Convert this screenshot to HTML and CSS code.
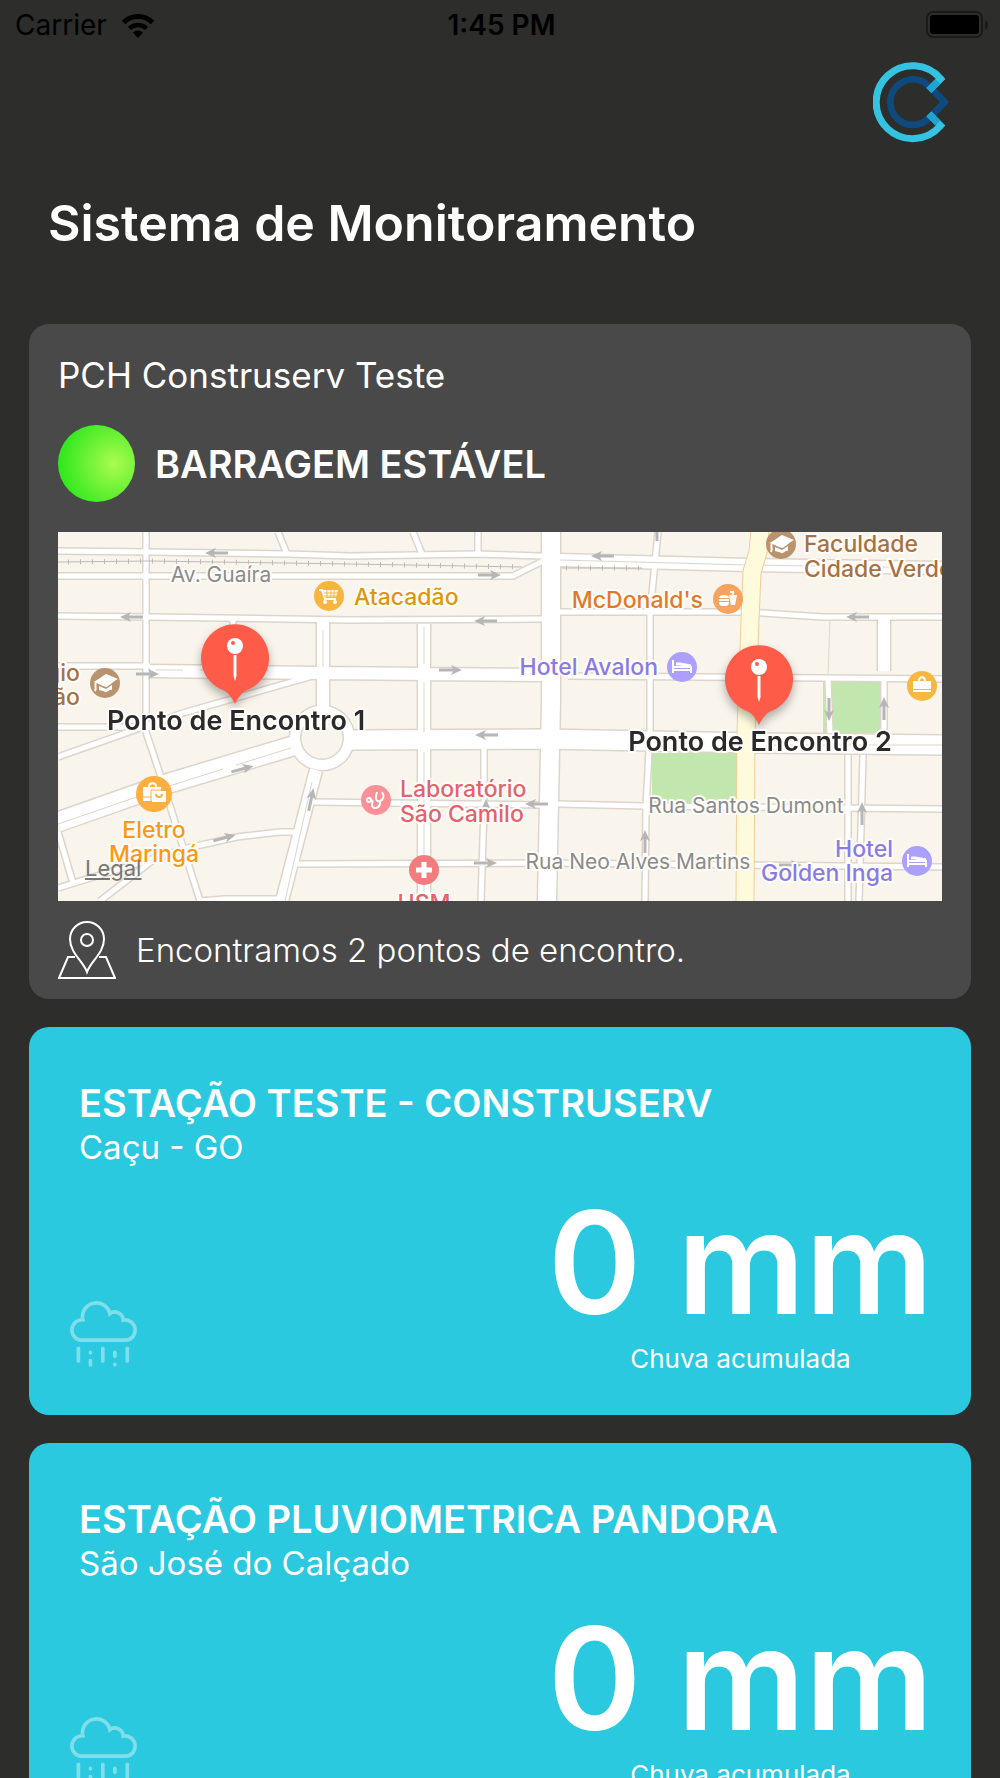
FILE: index.html
```html
<!DOCTYPE html>
<html lang="pt-BR">
<head>
  <meta charset="UTF-8" />
  <meta name="viewport" content="width=device-width, initial-scale=1.0" />
  <title>Sistema de Monitoramento</title>
  <link rel="stylesheet" href="styles.css">
</head>
<body>
  <div class="app">
    <div class="status-bar">
      <div class="carrier">
        <span>Carrier</span>
        <svg class="wifi" viewBox="0 0 34 25" aria-hidden="true">
          <path d="M2.500 9.500a20.500 20.500 0 0 1 29 0" fill="none" stroke="#000" stroke-width="5"/>
          <path d="M8.500 15.500a12 12 0 0 1 17 0" fill="none" stroke="#000" stroke-width="4.500"/>
          <path d="M12 19.500a7 7 0 0 1 10 0L17 25z"/>
        </svg>
      </div>
      <span class="time">1:45 PM</span>
      <svg class="battery" viewBox="0 0 62 28" aria-hidden="true">
        <rect x="1" y="1" width="55" height="25" rx="6" fill="none" stroke="#1a1a19" stroke-width="2"/>
        <rect x="4" y="4" width="49" height="19" rx="3"/>
        <path d="M59 9c4 2 4 8 0 10z" fill="#1a1a19"/>
      </svg>
    </div>

    <header>
      <svg class="logo" viewBox="100 65 230 242" role="img" aria-label="Construserv">
        <path d="M314 185L268 137A68 68 0 1 0 268 233Z" fill="none" stroke="#0f4a7f" stroke-width="20"/>
        <path d="M267 150L302 115A109 109 0 1 0 302 255L267 220" fill="none" stroke="#35c3e2" stroke-width="21"/>
        <path d="M267 150L294 123M267 220L294 247" stroke="#1fa4d2" stroke-width="21"/>
      </svg>
      <h1>Sistema de Monitoramento</h1>
    </header>

    <main>
      <section class="card dam">
        <h2 class="dam-name">PCH Construserv Teste</h2>
        <div class="dam-status">
          <span class="light"></span>
          <strong>BARRAGEM ESTÁVEL</strong>
        </div>

        <div class="map">
          <svg viewBox="0 0 884 369" role="img" aria-label="Mapa dos pontos de encontro">
            <defs>
              <path id="arrow" d="M-11-1.500H3L1-5L12 0L1 5L3 1.500H-11z"/>
              <g id="bed" fill="none" stroke="#fff" stroke-width="2">
                <path d="M-9-7V6M-9 3H9V6M-9 0H9V3"/>
                <path d="M-6-3H-2L9-1" stroke-width="3"/>
              </g>
              <g id="cap" fill="#fff">
                <path d="M-12-1C-8-2-3-7 1-9C5-7 9-6 13-4C8-2 5 3 1 4C-3 3-7 0-12-1z"/>
                <path d="M-6 3L1 6L7 2V7C4 6 3 10 0 9C-2 7-4 8-6 7z"/>
                <path d="M-9 0C-11 2-8 5-10 8" fill="none" stroke="#fff" stroke-width="2"/>
              </g>
              <g id="pin">
                <path d="M0 46C-3 40-6 35-12 32A34 34 0 1 1 12 32C6 35 3 40 0 46z" fill="#ff5b49"/>
                <circle cy="-12" r="8" fill="#fff"/>
                <circle cx="-2" cy="-15" r="2" fill="#ff5b49"/>
                <path d="M-1.500-3H1.500V18L0 23L-1.500 18z" fill="#fff"/>
              </g>
              <!-- streets, grouped by width: drawn twice, edge then surface -->
              <g id="small">
                <path d="M0 19L92 20L229 22L292 24L419 22L484 24M0 44H455L487 28M0 84L92 85L292 88L484 87M502 80H690L765 85H884M0 134H92M0 195H92M510 144L884 147"/>
                <path d="M220 0L229 22M355 0L364 22M420 0V22M88 0V200L100 236L125 315L142 369M0 225L125 181L265 141M175 88V100"/>
                <path d="M255 270L484 273M500 272L587 274L884 277M235 332L489 331L884 335M600 0L592 81V200L588 275L587 369M426 217V275L423 369"/>
                <path d="M242 300H222L179 305L129 316L0 356M99 325L42 369M0 300L15 351M770 148L772 201M826 147V201M790 223V369M805 223L801 369M142 369L167 367H230"/>
              </g>
              <g id="wide">
                <path d="M92 139L265 141L484 143M265 90V178M366 92V369M502 28L690 33L884 36M826 86V139M258 238L224 369"/>
              </g>
              <g id="large">
                <path d="M0 290L105 253L238 213M292 208L484 207L700 211L884 213"/>
              </g>
            </defs>

            <rect width="884" height="369" fill="#f9f4ec"/>
            <path d="M765 150H823V201H765zM594 221H679V271H594z" fill="#c1e7ae"/>
            <path d="M772 88L770 143" stroke="#dedacb"/>

            <g class="edge">
              <use href="#small" stroke-width="8"/>
              <use href="#wide" stroke-width="15"/>
              <use href="#large" stroke-width="22"/>
              <circle cx="264" cy="206" r="27" stroke-width="13"/>
              <path d="M493 0V170L489 369" stroke-width="21"/>
            </g>
            <g class="surface">
              <use href="#small" stroke-width="5"/>
              <use href="#wide" stroke-width="12"/>
              <use href="#large" stroke-width="19"/>
              <circle cx="264" cy="206" r="27" stroke-width="10"/>
              <path d="M493 0V170L489 369" stroke-width="18"/>
            </g>
            <g class="edge">
              <path d="M502 28L690 33L884 36M0 292L105 256L165 237M178 233L233 216M265 98V135M366 95V132M366 150V200M366 220V369M254 250L227 369M98 138H125M142 138H210M710 213H884"/>
            </g>
            <path d="M0 30L92 29L292 32L464 35M504 36H584" fill="none" stroke="#bdbab6"/>
            <path d="M10 30L92 29L292 32L464 35M508 36H584" fill="none" stroke="#bdbab6" stroke-width="5" stroke-dasharray="1 11"/>

            <g fill="none">
              <path d="M702 -2L700 20L694 40L692 88L688 201L687 371" stroke="#f3cd9a" stroke-width="19"/>
              <path d="M702 -2L700 20L694 40L692 88L688 201L687 371" stroke="#fdfbdb" stroke-width="17"/>
            </g>

            <g fill="#b6b6b6">
              <use href="#arrow" transform="translate(159 21) rotate(180)"/>
              <use href="#arrow" transform="translate(74 85) rotate(180)"/>
              <use href="#arrow" transform="translate(89 142)"/>
              <use href="#arrow" transform="translate(184 237) rotate(-15)"/>
              <use href="#arrow" transform="translate(166 306) rotate(-15)"/>
              <use href="#arrow" transform="translate(253 268) rotate(-78)"/>
              <use href="#arrow" transform="translate(431 43)"/>
              <use href="#arrow" transform="translate(545 24) rotate(180)"/>
              <use href="#arrow" transform="translate(428 89) rotate(180)"/>
              <use href="#arrow" transform="translate(392 138)"/>
              <use href="#arrow" transform="translate(429 203) rotate(180)"/>
              <use href="#arrow" transform="translate(479 272) rotate(180)"/>
              <use href="#arrow" transform="translate(427 331)"/>
              <use href="#arrow" transform="translate(428 279) rotate(-90)"/>
              <use href="#arrow" transform="translate(587 310) rotate(-90)"/>
              <use href="#arrow" transform="translate(599 -2) rotate(-90)"/>
              <use href="#arrow" transform="translate(800 85) rotate(180)"/>
              <use href="#arrow" transform="translate(771 177) rotate(90)"/>
              <use href="#arrow" transform="translate(826 177) rotate(-90)"/>
              <use href="#arrow" transform="translate(804 282) rotate(-90)"/>
              <use href="#arrow" transform="translate(732 333)"/>
            </g>

            <g class="street">
              <text x="163" y="50" text-anchor="middle">Av. Guaíra</text>
              <text x="688" y="281" text-anchor="middle">Rua Santos Dumont</text>
              <text x="580" y="337" text-anchor="middle">Rua Neo Alves Martins</text>
            </g>

            <g class="place">
              <text x="296" y="73" fill="#dc980a">Atacadão</text>
              <text x="645" y="76" text-anchor="end" fill="#e07a2d">McDonald's</text>
              <text x="600" y="143" text-anchor="end" fill="#8a7ae8">Hotel Avalon</text>
              <g fill="#a77243">
                <text x="746" y="20">Faculdade</text>
                <text x="746" y="45">Cidade Verde</text>
                <text x="22" y="149" text-anchor="end">Colégio</text>
                <text x="22" y="173" text-anchor="end">João</text>
              </g>
              <g fill="#fd9812" text-anchor="middle">
                <text x="96" y="306">Eletro</text>
                <text x="96" y="330">Maringá</text>
              </g>
              <g fill="#e2636b">
                <text x="342" y="265">Laboratório</text>
                <text x="342" y="290">São Camilo</text>
                <text x="366" y="379" text-anchor="middle">HSM</text>
              </g>
              <g fill="#8a7ae8" text-anchor="end">
                <text x="835" y="325">Hotel</text>
                <text x="835" y="349">Golden Inga</text>
              </g>
            </g>

            <g transform="translate(271 64)">
              <circle r="15" fill="#f6b53e"/>
              <path d="M-10-6H-7L-4 3H7" fill="none" stroke="#fff" stroke-width="2"/>
              <path d="M-7-6H9L7 1H-4z" fill="#fff"/>
              <path d="M-5-3H8M-5 0H8M-2-6V1M2-6V1M5-6V1" stroke="#f6b53e"/>
              <circle cx="-4" cy="6" r="2" fill="#fff"/><circle cx="6" cy="6" r="2" fill="#fff"/>
            </g>
            <g transform="translate(670 67)">
              <circle r="15" fill="#f8a360"/>
              <path d="M-9-1C-9-5 1-5 1-1zM-9 0H1V2H-9zM-9 3H1C1 7-1 7-4 7C-8 7-9 6-9 3zM1-4H9L7 6H3z" fill="#fff"/>
              <path d="M2-7H5V-3" fill="none" stroke="#fff" stroke-width="2"/>
            </g>
            <circle cx="624" cy="135" r="15" fill="#ab9fff"/>
            <use href="#bed" x="624" y="135"/>
            <circle cx="859" cy="329" r="15" fill="#ab9fff"/>
            <use href="#bed" x="859" y="329"/>
            <circle cx="723" cy="12" r="15" fill="#b9926e"/>
            <use href="#cap" x="723" y="12"/>
            <circle cx="47" cy="151" r="15" fill="#b9926e"/>
            <use href="#cap" x="47" y="151"/>
            <g transform="translate(864 154)">
              <circle r="15" fill="#f6b840"/>
              <path d="M-9-5H9V3H-9zM-9 4H9V6H-9z" fill="#fff"/>
              <path d="M-3-5C-3-10 3-10 3-5" fill="none" stroke="#fff" stroke-width="2"/>
            </g>
            <g transform="translate(96 262)">
              <circle r="18" fill="#ffae40"/>
              <path d="M-11-7H7V7H-11z" fill="#fff"/>
              <path d="M-5-7C-5-12 2-12 2-7" fill="none" stroke="#fff" stroke-width="2"/>
              <path d="M-11 3H-3M-3 8V-4H13" fill="none" stroke="#ffae40"/>
              <path d="M-2-3H12V8H-2z" fill="#fff"/>
              <path d="M2 0C2 4 8 4 8 0" fill="none" stroke="#ffae40" stroke-width="2"/>
            </g>
            <g transform="translate(318 268)" fill="none" stroke="#fff" stroke-width="2">
              <circle r="15" fill="#fb9097" stroke="none"/>
              <path d="M1-8C-2 1 2 2 4 1C7 0 9-4 6-8M4 1C5 9-4 10-4 5C-4 2-2 1-5 0"/>
              <circle cx="-7" r="2"/>
            </g>
            <g transform="translate(366 338)">
              <circle r="15" fill="#f47b7e"/>
              <path d="M0-8V8M-8 0H8" stroke="#fff" stroke-width="5"/>
            </g>

            <g class="pins">
              <use href="#pin" x="177" y="126"/>
              <use href="#pin" x="701" y="147"/>
            </g>
            <g class="meeting" text-anchor="middle">
              <text x="178" y="198">Ponto de Encontro 1</text>
              <text x="702" y="219">Ponto de Encontro 2</text>
            </g>
          </svg>
          <a class="legal" href="#legal">Legal</a>
        </div>

        <div class="points">
          <svg viewBox="0 0 58 58" fill="none" stroke="#fff" stroke-width="2" aria-hidden="true">
            <path d="M29 51C25 40 12 32 12 18A17 17 0 0 1 46 18C46 32 33 40 29 51z"/>
            <circle cx="29" cy="19" r="6"/>
            <path d="M17 36H10L1 57H57L48 36H41"/>
          </svg>
          <p>Encontramos 2 pontos de encontro.</p>
        </div>
      </section>

      <section class="card station">
        <h2>ESTAÇÃO TESTE - CONSTRUSERV</h2>
        <p class="city">Caçu - GO</p>
        <div class="rain">
          <svg viewBox="50 55 215 203" aria-hidden="true">
            <g fill="none" stroke="#fff" stroke-width="11" stroke-linecap="round">
              <path d="M88 175A31 31 0 0 1 97 114A41 41 0 0 1 178 96A25 25 0 0 1 218 115A30 30 0 0 1 228 175Z"/>
              <path d="M84 199V237M120 211V212M120 236V249M157 199V237M193 211V223M193 247V248M230 199V237"/>
            </g>
          </svg>
          <div class="reading">
            <strong>0 mm</strong>
            <span>Chuva acumulada</span>
          </div>
        </div>
      </section>

      <section class="card station">
        <h2>ESTAÇÃO PLUVIOMETRICA PANDORA</h2>
        <p class="city">São José do Calçado</p>
        <div class="rain">
          <svg viewBox="50 55 215 203" aria-hidden="true">
            <g fill="none" stroke="#fff" stroke-width="11" stroke-linecap="round">
              <path d="M88 175A31 31 0 0 1 97 114A41 41 0 0 1 178 96A25 25 0 0 1 218 115A30 30 0 0 1 228 175Z"/>
              <path d="M84 199V237M120 211V212M120 236V249M157 199V237M193 211V223M193 247V248M230 199V237"/>
            </g>
          </svg>
          <div class="reading">
            <strong>0 mm</strong>
            <span>Chuva acumulada</span>
          </div>
        </div>
      </section>
    </main>
  </div>
</body>
</html>
```
FILE: styles.css
```css
* {
  box-sizing: border-box;
}
body {
  margin: 0;
  background: #2d2d2b;
  color: #fff;
  font-family: Inter, "Liberation Sans", sans-serif;
}
h1, h2, p {
  margin: 0;
}
.app {
  height: 100vh;
  overflow-y: auto;
  scrollbar-width: none;
}

/* status bar */
.status-bar {
  display: grid;
  grid-template-columns: 1fr auto 1fr;
  align-items: center;
  height: 50px;
  padding: 0 12px 0 15px;
  color: #000;
  font-size: 28px;
}
.carrier {
  display: flex;
  align-items: center;
  gap: 14px;
}
.wifi {
  width: 34px;
  height: 25px;
}
.time {
  font-weight: 600;
}
.battery {
  width: 62px;
  height: 28px;
  justify-self: end;
}

/* header */
header {
  padding: 12px 50px 69px 48px;
}
.logo {
  display: block;
  width: 77px;
  height: 81px;
  margin-left: auto;
}
h1 {
  margin-top: 48px;
  font-size: 50px;
  line-height: 64px;
  font-weight: 600;
}

/* cards */
main {
  display: flex;
  flex-direction: column;
  gap: 28px;
  padding: 0 29px 28px;
}
.card {
  border-radius: 20px;
}
.dam {
  padding: 29px 29px 20px;
  background: #494949;
}
.dam-name {
  font-size: 35px;
  line-height: 44px;
  font-weight: 400;
}
.dam-status {
  display: flex;
  align-items: center;
  gap: 20px;
  margin: 28px 0 30px;
  font-size: 38px;
}
.dam-status strong {
  font-weight: 600;
}
.light {
  width: 77px;
  height: 77px;
  border-radius: 50%;
  background: radial-gradient(circle at 73% 50%, #abfc4f, #33e81f 78%);
}
.points {
  display: flex;
  align-items: center;
  gap: 20px;
  margin-top: 20px;
  font-size: 33px;
  font-weight: 300;
}
.points svg {
  width: 58px;
  height: 58px;
}

/* map */
.map {
  position: relative;
}
.map svg {
  display: block;
  width: 100%;
  overflow: hidden;
}
.edge {
  fill: none;
  stroke: #ddd5cb;
}
.surface {
  fill: none;
  stroke: #fff;
}
.map text {
  stroke: #fffdf9;
  stroke-width: 4px;
  stroke-linejoin: round;
  paint-order: stroke;
}
.street {
  fill: #8b8b8b;
  font-size: 21px;
}
.place {
  font-size: 23px;
  font-weight: 500;
}
.meeting {
  fill: #2a2a2c;
  font-size: 27px;
  font-weight: 600;
}
.pins {
  filter: drop-shadow(0 5px 5px rgba(0, 0, 0, 0.3));
}
.legal {
  position: absolute;
  left: 27px;
  bottom: 20px;
  color: #777;
  font-size: 22px;
}

/* rain stations */
.station {
  padding: 54px 38px 38px;
  background: #2bc9df;
}
.station h2 {
  padding-left: 12px;
  font-size: 38px;
  line-height: 44px;
  font-weight: 600;
}
.city {
  padding-left: 12px;
  font-size: 33px;
  line-height: 44px;
}
.rain {
  display: flex;
  align-items: flex-end;
  justify-content: space-between;
  margin-top: 18px;
}
.rain svg {
  width: 72px;
  height: 68px;
  margin-bottom: 9px;
  opacity: 0.4;
}
.reading {
  display: flex;
  flex-direction: column;
  align-items: center;
  gap: 4px;
}
.reading strong {
  font-size: 142px;
  line-height: 150px;
  font-weight: 600;
}
.reading span {
  font-size: 26px;
  line-height: 36px;
}
```
